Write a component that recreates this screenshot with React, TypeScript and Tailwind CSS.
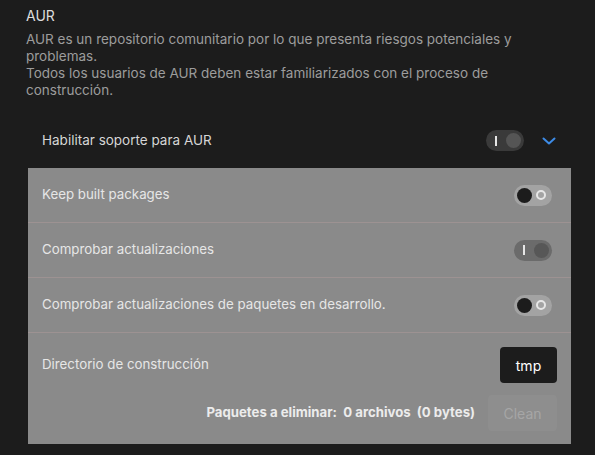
import React from "react";

function ToggleOff() {
  return (
    <div className="w-[38px] h-[21px] rounded-full bg-[#a3a3a3] flex items-center justify-between pl-[3px] pr-[6px]">
      <div className="w-[15px] h-[15px] rounded-full bg-[#1c1c1c]" />
      <div className="w-[10px] h-[10px] rounded-full border-2 border-[#e6e6e6]" />
    </div>
  );
}

function ToggleOn({ track, knob }: { track: string; knob: string }) {
  return (
    <div className={`w-[38px] h-[21px] rounded-full flex items-center justify-between pl-[9px] pr-[3px] ${track}`}>
      <div className="w-[2px] h-[10px] bg-[#e6e6e6]" />
      <div className={`w-[15px] h-[15px] rounded-full ${knob}`} />
    </div>
  );
}

export default function App() {
  return (
    <div
      className="w-[595px] h-[455px] bg-[#1c1c1c] overflow-hidden"
      style={{ fontFamily: "Inter, 'Noto Sans', sans-serif" }}
    >
      <div className="pl-[26px] pt-[7px]">
        <div className="text-[14px] leading-[18px] text-[#dcdcdc]">AUR</div>
        <div className="mt-[6px] w-[535px] text-[13.5px] leading-[17px] text-[#9c9c9c]">
          AUR es un repositorio comunitario por lo que presenta riesgos potenciales y problemas.
          <br />
          Todos los usuarios de AUR deben estar familiarizados con el proceso de construcción.
        </div>
      </div>
      <div className="mt-[14px] ml-[28px] mr-[24px]">
        <div className="h-[55px] flex items-center pl-[14px] pr-[15px]">
          <span className="flex-1 text-[13.5px] text-[#d6d6d6]">Habilitar soporte para AUR</span>
          <ToggleOn track="bg-[#3a3a3a]" knob="bg-[#555555]" />
          <svg className="ml-[18px]" width="14" height="8" viewBox="0 0 14 8" fill="none">
            <path d="M1.5 1.5 L7 6.5 L12.5 1.5" stroke="#3d8be6" strokeWidth="2" strokeLinecap="round" strokeLinejoin="round" />
          </svg>
        </div>
        <div className="bg-[#8a8a8a] text-[13.3px] text-[#e6e6e6]">
          <div className="h-[55px] flex items-center pl-[14px] pr-[19px] border-b border-[#9d9292]">
            <span className="flex-1">Keep built packages</span>
            <ToggleOff />
          </div>
          <div className="h-[55px] flex items-center pl-[14px] pr-[19px] border-b border-[#9d9292]">
            <span className="flex-1">Comprobar actualizaciones</span>
            <ToggleOn track="bg-[#6b6b6b]" knob="bg-[#575757]" />
          </div>
          <div className="h-[55px] flex items-center pl-[14px] pr-[19px] border-b border-[#9d9292]">
            <span className="flex-1">Comprobar actualizaciones de paquetes en desarrollo.</span>
            <ToggleOff />
          </div>
          <div className="pl-[14px] pr-[14px] pt-[14px] pb-[13px]">
            <div className="flex items-center h-[36px]">
              <span className="flex-1">Directorio de construcción</span>
              <button className="w-[57px] h-[36px] rounded-[4px] bg-[#1c1c1c] text-white text-[14px]">tmp</button>
            </div>
            <div className="flex items-center justify-end mt-[12px] h-[36px]">
              <span className="font-bold text-[13.2px] text-[#ececec] whitespace-pre">
                {"Paquetes a eliminar:  0 archivos  (0 bytes)"}
              </span>
              <button className="ml-[13px] w-[69px] h-[36px] rounded-[4px] bg-[#8e8e8e] text-[#a6a6a6] text-[14px]">Clean</button>
            </div>
          </div>
        </div>
      </div>
    </div>
  );
}
